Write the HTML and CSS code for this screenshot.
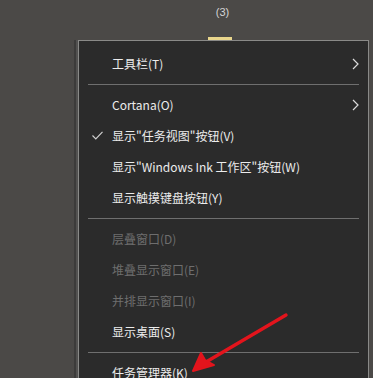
FILE: index.html
```html
<!DOCTYPE html>
<html lang="zh-CN">
<head>
    <meta charset="UTF-8">
    <meta name="viewport" content="width=device-width, initial-scale=1.0">
    <title>任务栏菜单</title>
    <link rel="stylesheet" href="styles.css">
</head>
<body>
    <div class="taskbar">
        <span class="badge">(3)</span>
        <span class="active-bar"></span>
    </div>

    <div class="menu">
        <div class="item">
            <span class="label">工具栏(T)</span>
            <svg class="chevron" width="7" height="12" viewBox="0 0 7 12"><path d="M1 1 L6 6 L1 11" fill="none" stroke="#dcdcdc" stroke-width="1.2"/></svg>
        </div>
        <div class="sep"></div>
        <div class="item">
            <span class="label">Cortana(O)</span>
            <svg class="chevron" width="7" height="12" viewBox="0 0 7 12"><path d="M1 1 L6 6 L1 11" fill="none" stroke="#dcdcdc" stroke-width="1.2"/></svg>
        </div>
        <div class="item">
            <svg class="check" width="11" height="9" viewBox="0 0 11 9"><path d="M0.5 4.5 L3.8 7.8 L10.5 0.8" fill="none" stroke="#d0d0d0" stroke-width="1.2"/></svg>
            <span class="label">显示"任务视图"按钮(V)</span>
        </div>
        <div class="item">
            <span class="label">显示"Windows Ink 工作区"按钮(W)</span>
        </div>
        <div class="item">
            <span class="label">显示触摸键盘按钮(Y)</span>
        </div>
        <div class="sep"></div>
        <div class="item disabled">
            <span class="label">层叠窗口(D)</span>
        </div>
        <div class="item disabled">
            <span class="label">堆叠显示窗口(E)</span>
        </div>
        <div class="item disabled">
            <span class="label">并排显示窗口(I)</span>
        </div>
        <div class="item">
            <span class="label">显示桌面(S)</span>
        </div>
        <div class="sep"></div>
        <div class="item">
            <span class="label">任务管理器(K)</span>
        </div>
    </div>

    <!-- red annotation arrow drawn over the menu -->
    <svg class="arrow" width="373" height="378" viewBox="0 0 373 378">
        <path d="M286 315 L206 362" stroke="#e3141c" stroke-width="3.4" stroke-linecap="round"/>
        <path d="M193 371 L201 353 L205 360 L214 365 Z" fill="#e3141c" stroke="#e3141c" stroke-width="2" stroke-linejoin="round"/>
    </svg>
</body>
</html>
```

FILE: styles.css
```css
* {
    margin: 0;
    padding: 0;
    box-sizing: border-box;
}

html, body {
    width: 100%;
    height: 100%;
    overflow: hidden;
}

body {
    background-color: #4b4947;
    font-family: "Noto Sans CJK SC", "Noto Sans", sans-serif;
    position: relative;
}

.taskbar {
    height: 40px;
    display: flex;
    flex-direction: column;
    align-items: center;
    padding-left: 66px;
}

.badge {
    font-size: 11px;
    line-height: 12px;
    color: #d4d4d4;
    margin-top: 6px;
    margin-left: 6px;
    font-family: "Liberation Sans", sans-serif;
}

.active-bar {
    width: 24px;
    height: 3px;
    margin-top: auto;
    background: #e9d68c;
}

.menu {
    margin-left: 78px;
    width: 291px;
    height: 338px;
    overflow: hidden;
    background: #2b2b2b;
    border: 1px solid #8a8a88;
    border-bottom: none;
    padding-top: 7px;
    box-shadow: -2px 0 0 #525150, -4px 0 0 #3c3b3a;
}

.item {
    height: 31px;
    flex-shrink: 0;
    display: flex;
    align-items: center;
    padding-left: 33px;
    padding-right: 9px;
    position: relative;
    color: #ececec;
    font-size: 12px;
}

.label {
    flex: 1;
    white-space: nowrap;
}

.disabled {
    color: #6e6e6e;
}

.check {
    position: absolute;
    left: 13px;
    top: 11px;
}

.sep {
    height: 1px;
    margin: 5px 9px 4px 9px;
    background: #6f6f6f;
}

.arrow {
    position: absolute;
    left: 0;
    top: 0;
    pointer-events: none;
}
```
